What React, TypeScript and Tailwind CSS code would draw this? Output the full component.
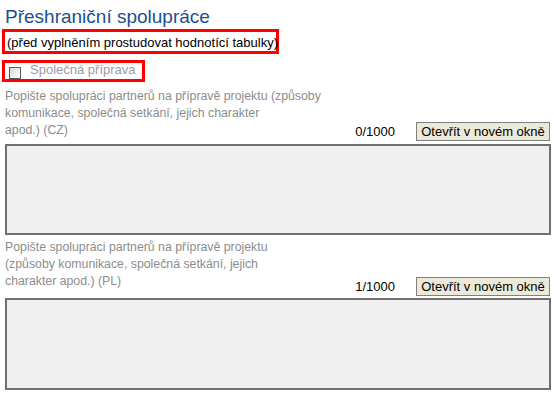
import React from "react";

interface SectionProps {
  lines: string[];
  count: string;
  rowPad: string;
  areaGap: string;
  areaHeight: string;
}

function Section({ lines, count, rowPad, areaGap, areaHeight }: SectionProps) {
  return (
    <div className="flex flex-col">
      {/* label + counter + button */}
      <div className="flex items-end">
        <div className={`ml-[3px] text-[12.3px] leading-[17px] text-[#8c8c8c] ${rowPad}`}>
          {lines.map((l) => (
            <span key={l} className="block whitespace-nowrap">
              {l}
            </span>
          ))}
        </div>
        <span className="ml-auto mr-[21px] mb-[1px] text-[13px] leading-[17px] text-black">{count}</span>
        <button className="w-[134px] h-[19px] mr-[1px] bg-[#ece9d8] border border-[#808080] text-[13px] leading-[17px] text-black whitespace-nowrap">
          Otevřít v novém okně
        </button>
      </div>
      <div className={`ml-[3px] ${areaGap} ${areaHeight} bg-[#f0f0f0] border-2 border-[#707070]`} />
    </div>
  );
}

export default function App() {
  return (
    <div
      className="w-[554px] h-[394px] overflow-hidden bg-white pl-[2px] pr-[3px]"
      style={{ fontFamily: '"Liberation Sans", Arial, sans-serif' }}
    >
      {/* Nadpis */}
      <h1 className="ml-[3px] pt-[5px] text-[19px] leading-[23px] text-[#1c4f8e] font-normal">
        Přeshraniční spolupráce
      </h1>

      {/* Upozornění */}
      <div className="mt-[1px] w-[277px] border-[3px] border-[#ff0000] pl-[2px] pt-[2px] text-[13px] leading-[17px] text-black whitespace-nowrap">
        (před vyplněním prostudovat hodnotící tabulky)
      </div>

      {/* Checkbox */}
      <div className="mt-[6px] w-[143px] h-[22px] border-[3px] border-[#ff0000] flex items-start">
        <span className="ml-[4px] mt-[4px] w-[12px] h-[12px] shrink-0 border border-[#5a5a5a] bg-gradient-to-br from-[#d8d8d8] to-white" />
        <span className="ml-[9px] -mt-[1px] text-[13px] leading-[16px] text-[#9a9aa6] whitespace-nowrap">
          Společná příprava
        </span>
      </div>

      <div className="mt-[6px]">
        <Section
          lines={[
            "Popište spolupráci partnerů na přípravě projektu (způsoby",
            "komunikace, společná setkání, jejich charakter",
            "apod.) (CZ)",
          ]}
          count="0/1000"
          rowPad="pb-[2px]"
          areaGap="mt-[3px]"
          areaHeight="h-[91px]"
        />
      </div>

      <div className="mt-[4px]">
        <Section
          lines={[
            "Popište spolupráci partnerů na přípravě projektu",
            "(způsoby komunikace, společná setkání, jejich",
            "charakter apod.) (PL)",
          ]}
          count="1/1000"
          rowPad="pb-[6px]"
          areaGap="mt-[2px]"
          areaHeight="h-[92px]"
        />
      </div>
    </div>
  );
}
